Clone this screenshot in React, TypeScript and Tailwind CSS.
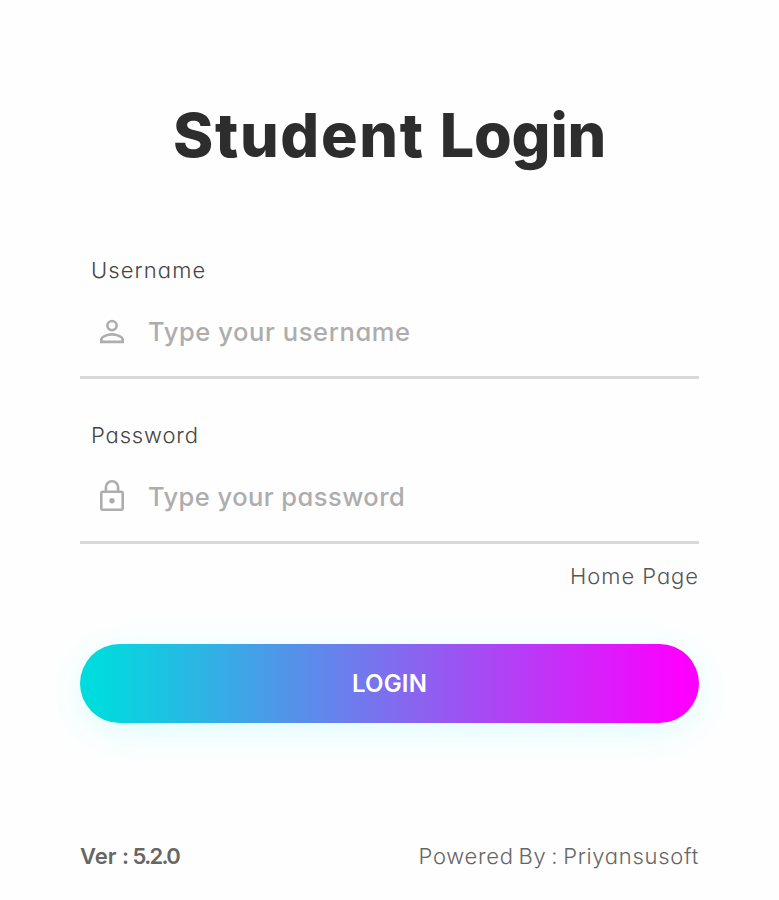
import { useState } from 'react';
import type { ReactNode } from 'react';

function UserIcon() {
  return (
    <svg width="26" height="26" viewBox="0 0 26 26" fill="none" stroke="currentColor" strokeWidth="2.6">
      <circle cx="13" cy="6.6" r="4.6" />
      <path d="M2.3 22.9v-2.3c0-3.1 6.5-5.2 10.7-5.2s10.7 2.1 10.7 5.2v2.3z" />
    </svg>
  );
}

function LockIcon() {
  return (
    <svg
      width="26"
      height="34"
      viewBox="0 0 26 34"
      fill="none"
      stroke="currentColor"
      strokeWidth="2.6"
      className="mb-0.5"
    >
      <rect x="2.3" y="12.8" width="21.4" height="18" rx="1.8" />
      <path d="M6.9 13V8.3a6.1 6.1 0 0 1 12.2 0V13" />
      <circle cx="13" cy="21.8" r="2.7" fill="currentColor" stroke="none" />
    </svg>
  );
}

function Field({
  label,
  labelClass,
  type,
  placeholder,
  inputClass,
  icon,
}: {
  label: string;
  labelClass: string;
  type: string;
  placeholder: string;
  inputClass: string;
  icon: ReactNode;
}) {
  const [value, setValue] = useState('');
  return (
    <label className="flex h-[125px] flex-col border-b-[3px] border-[#d9d9d9]">
      <span className={`pl-[11px] text-[22px] leading-[33px] font-light text-[#444] ${labelClass}`}>
        {label}
      </span>
      <span className="flex h-[89px] items-center pl-[19px] text-[#adadad]">
        <span className="flex w-[49px] shrink-0">{icon}</span>
        <input
          type={type}
          value={value}
          onChange={(e) => setValue(e.target.value)}
          placeholder={placeholder}
          className={`h-full w-full bg-transparent text-[25.5px] font-medium text-[#333] outline-none placeholder:text-[#adadad] ${inputClass}`}
        />
      </span>
    </label>
  );
}

export default function App() {
  return (
    <div className="h-[900px] w-[779px] bg-[#fefefe] px-20 pt-[98px] font-['Inter',sans-serif] [font-feature-settings:'cv11']">
      <form onSubmit={(e) => e.preventDefault()} className="w-[619px]">
        <h1 className="h-[156px] text-center text-[61px] leading-[75px] font-extrabold whitespace-nowrap text-[#2d2d2d]">
          <span className="tracking-[1.7px]">Student</span>
          <span className="ml-[15px] tracking-[-0.2px]">Login</span>
        </h1>
        <div className="flex flex-col gap-10">
          <Field
            label="Username"
            labelClass="tracking-[1.1px]"
            type="text"
            placeholder="Type your username"
            inputClass="tracking-[0.6px]"
            icon={<UserIcon />}
          />
          <Field
            label="Password"
            labelClass="tracking-[0.85px]"
            type="password"
            placeholder="Type your password"
            inputClass="tracking-[0.45px]"
            icon={<LockIcon />}
          />
        </div>
        <div className="flex h-[100px] justify-end pt-4">
          <a href="#" className="text-[22px] leading-[33px] font-light tracking-[0.95px] text-[#555]">
            Home Page
          </a>
        </div>
        <button className="flex h-[79px] w-full items-center justify-center rounded-full bg-[linear-gradient(90deg,#00dbde_3%,#fc00ff_97%)] text-[24px] font-semibold tracking-[0.2px] text-white shadow-[0_8px_40px_-4px_rgba(0,240,255,0.16)]">
          LOGIN
        </button>
        <div className="flex justify-between pt-[117px] text-[22px] leading-[33px] whitespace-nowrap text-[#666]">
          <span className="font-semibold">
            Ver : <span className="-ml-0.5 tracking-[-1.7px]">5.2.0</span>
          </span>
          <span className="font-light tracking-[0.7px] [word-spacing:-2px]">Powered By : Priyansusoft</span>
        </div>
      </form>
    </div>
  );
}
